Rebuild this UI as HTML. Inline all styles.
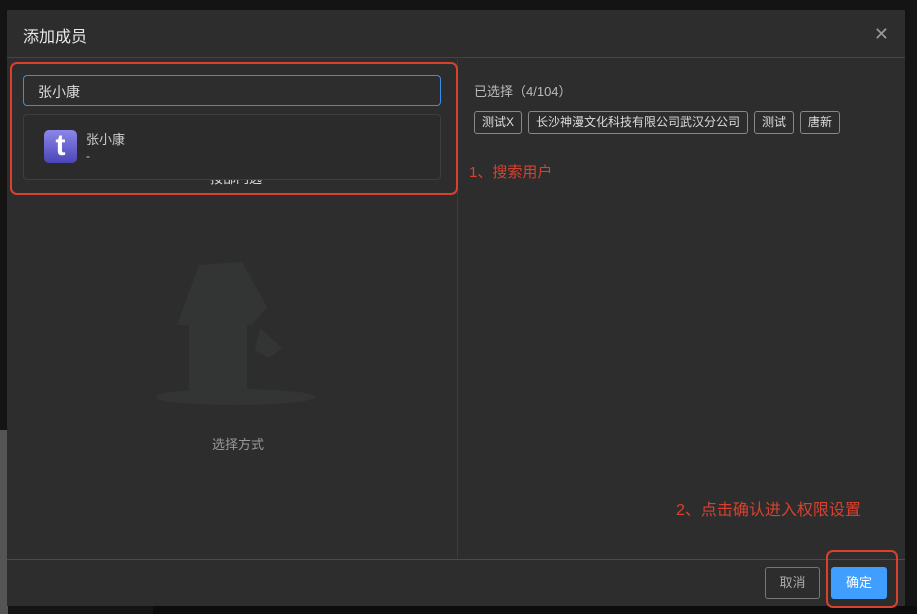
<!DOCTYPE html>
<html><head><meta charset="utf-8"><style>
*{box-sizing:border-box;margin:0;padding:0}
body{width:917px;height:614px;background:#141414;position:relative;overflow:hidden;font-family:"Liberation Sans","Noto Sans CJK SC",sans-serif;}
.bgl{position:absolute;left:0;top:430px;width:8px;height:184px;background:#555}
.bgb{position:absolute;left:153px;top:606px;width:764px;height:8px;background:#0c0c0c}
.modal{position:absolute;left:7px;top:10px;width:898px;height:596px;background:#2d2d2d;}
.hd{position:absolute;left:0;top:0;width:100%;height:48px;border-bottom:1px solid #444;}
.title{position:absolute;left:16px;top:13px;font-size:16px;color:#e8e8e8}
.close{position:absolute;right:16px;top:14px;color:#999;font-size:18px}
.vdiv{position:absolute;left:450px;top:49px;width:1px;height:500px;background:#3c3c3c}
.ft{position:absolute;left:0;top:549px;width:100%;height:1px;background:#4a4a4a}
.inp{position:absolute;left:16px;top:65px;width:418px;height:31px;border:1px solid #3a8ee6;border-radius:4px;color:#ddd;font-size:14px;padding:6px 0 0 14px}
.dd{position:absolute;left:16px;top:104px;width:418px;height:66px;border:1px solid #3e3e3e;border-radius:4px;background:#2b2b2b}
.av{position:absolute;left:20px;top:15px;width:33px;height:33px;border-radius:5px;background:linear-gradient(#8b86e8,#4b46b8);color:#fff;font-weight:bold;font-size:30px;text-align:center;line-height:32px}
.nm{position:absolute;left:62px;top:14px;font-size:13px;color:#ccc}
.dash{position:absolute;left:62px;top:34px;font-size:12px;color:#ccc}
.red1{position:absolute;left:10px;top:62px;width:448px;height:133px;border:2px solid #d9412f;border-radius:7px}
.sel{position:absolute;left:467px;top:71px;font-size:13px;color:#bbb}
.tags{position:absolute;left:467px;top:101px;display:flex;gap:6px}
.tag{border:1px solid #888;border-radius:3px;height:23px;padding:0 7px;font-size:12px;color:#ddd;line-height:21px}
.a1{position:absolute;left:462px;top:151px;font-size:15px;color:#d9412f}
.a2{position:absolute;left:669px;top:486px;font-size:16px;color:#d9412f}
.cap{position:absolute;left:205px;top:424px;font-size:13px;color:#999}
.cancel{position:absolute;left:758px;top:557px;width:55px;height:32px;border:1px solid #777;border-radius:3px;color:#aaa;font-size:13px;text-align:center;line-height:30px}
.ok{position:absolute;left:824px;top:557px;width:56px;height:32px;background:#409eff;border-radius:3px;color:#fff;font-size:13px;text-align:center;line-height:32px}
.red2{position:absolute;left:826px;top:550px;width:72px;height:58px;border:2px solid #d9412f;border-radius:7px}
</style></head><body>
<div class="bgl"></div><div class="bgb"></div>
<div class="modal">
<div class="hd"><div class="title">添加成员</div><div class="close">✕</div></div>
<div class="vdiv"></div>
<div class="ft"></div>
<svg style="position:absolute;left:150px;top:240px" width="170" height="170">
<g fill="#333534">
<polygon points="42,15 85,12 110,57 95,75 20,75"/>
<rect x="32" y="65" width="58" height="82"/>
<polygon points="103,78 125,98 112,108 98,100"/>
<ellipse cx="78" cy="147" rx="80" ry="8"/>
</g></svg>
<div class="cap">选择方式</div>
<div style="position:absolute;left:203px;top:158px;font-size:13px;color:#ddd">按部门选</div>
<div class="inp">张小康</div>
<div class="dd"><div class="av">t</div><div class="nm">张小康</div><div class="dash">-</div></div>
<div class="sel">已选择（4/104）</div>
<div class="tags"><div class="tag">测试X</div><div class="tag">长沙神漫文化科技有限公司武汉分公司</div><div class="tag">测试</div><div class="tag">唐新</div></div>
<div class="a1">1、搜索用户</div>
<div class="a2">2、点击确认进入权限设置</div>
<div class="cancel">取消</div>
<div class="ok">确定</div>
</div>
<div class="red1"></div>
<div class="red2"></div>
</body></html>
